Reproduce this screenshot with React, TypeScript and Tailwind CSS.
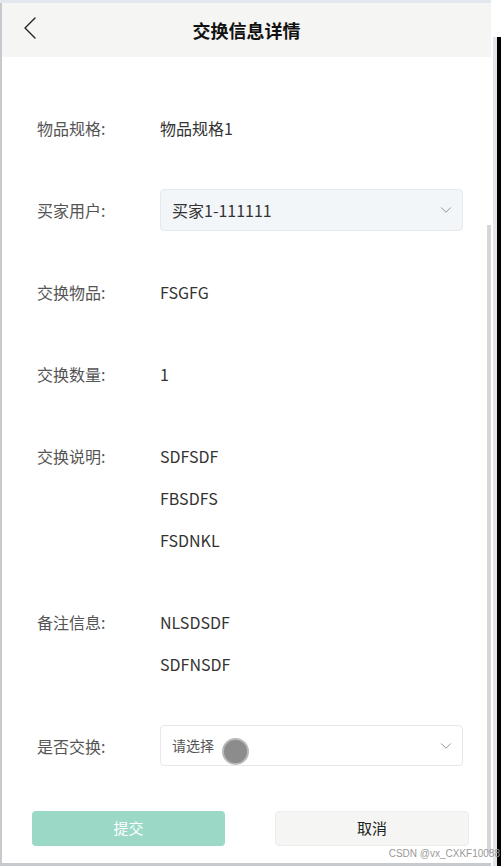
import React from "react";
import { ChevronDown } from "lucide-react";

const font = { fontFamily: '"Noto Sans CJK SC", "Noto Sans", sans-serif' };

interface RowProps {
  label: string;
  children: React.ReactNode;
}

const Row: React.FC<RowProps> = ({ label, children }) => (
  <div className="flex items-start pl-[35px] pr-[28px]">
    <div className="w-[123px] shrink-0 text-[16px] leading-[22px] text-[#555]">{label}</div>
    <div className="flex-1">{children}</div>
  </div>
);

const Value: React.FC<{ lines: string[] }> = ({ lines }) => (
  <div className="flex flex-col gap-[20px] text-[16px] leading-[22px] text-[#333]">
    {lines.map((l) => (
      <div key={l}>{l}</div>
    ))}
  </div>
);

export default function App() {
  return (
    <div className="w-[501px] h-[866px] flex bg-white overflow-hidden" style={font}>
      <div className="flex-1 flex flex-col">
        {/* top strip */}
        <div className="h-[3px] bg-[#e3e8ee]" />
        <div className="flex-1 flex">
          <div className="w-[2px] bg-[#c6cacf]" />
          <div className="flex-1 flex flex-col relative">
            {/* header */}
            <div className="h-[54px] bg-[#f5f5f3] flex items-center relative">
              <svg className="absolute left-[21px] top-[14px]" width="14" height="22" viewBox="0 0 14 22" fill="none">
                <polyline points="12,1 2,11 12,21" stroke="#222" strokeWidth="1.4" strokeLinecap="round" strokeLinejoin="round" />
              </svg>
              <div className="flex-1 text-center text-[18px] font-bold text-[#111]">交换信息详情</div>
            </div>

            {/* form */}
            <div className="flex-1 flex flex-col pt-[60px] gap-[60px]">
              <Row label="物品规格:">
                <Value lines={["物品规格1"]} />
              </Row>
              <div className="flex items-center pl-[35px] pr-[28px] -my-[10px]">
                <div className="w-[123px] shrink-0 text-[16px] leading-[22px] text-[#555]">买家用户:</div>
                <div className="flex-1 h-[42px] rounded-[4px] border border-[#e6e9ec] bg-[#f3f6f8] flex items-center pl-[11px] pr-[7px]">
                  <span className="flex-1 text-[16px] text-[#333]">买家1-111111</span>
                  <ChevronDown size={18} strokeWidth={1.2} className="text-[#888]" />
                </div>
              </div>
              <Row label="交换物品:">
                <Value lines={["FSGFG"]} />
              </Row>
              <Row label="交换数量:">
                <Value lines={["1"]} />
              </Row>
              <Row label="交换说明:">
                <Value lines={["SDFSDF", "FBSDFS", "FSDNKL"]} />
              </Row>
              <Row label="备注信息:">
                <Value lines={["NLSDSDF", "SDFNSDF"]} />
              </Row>
              <div className="flex items-center pl-[35px] pr-[28px] -my-[10px]">
                <div className="w-[123px] shrink-0 text-[16px] leading-[22px] text-[#555]">是否交换:</div>
                <div className="flex-1 h-[41px] rounded-[4px] border border-[#e8e8e8] bg-white flex items-center pl-[11px] pr-[7px] relative">
                  <span className="flex-1 text-[14px] text-[#555]">请选择</span>
                  <ChevronDown size={18} strokeWidth={1.2} className="text-[#888]" />
                  <span className="absolute left-[61px] top-[12px] w-[27px] h-[27px] rounded-full bg-[#8c8c8c] border-2 border-[#b8b8b8]" />
                </div>
              </div>
            </div>

            {/* buttons */}
            <div className="flex justify-between pl-[30px] pr-[22px] pb-[17px]">
              <button className="w-[193px] h-[35px] rounded-[4px] bg-[#9bd9c6] text-white text-[15px]">提交</button>
              <button className="w-[194px] h-[35px] rounded-[4px] bg-[#f5f5f3] border border-[#ededed] text-[#222] text-[15px]">
                取消
              </button>
            </div>

            {/* scrollbar thumb */}
            <div className="absolute right-[0px] top-[222px] bottom-[10px] w-[4px] bg-[#d6d6d6]" />
            <div
              className="absolute right-[-9px] bottom-[4px] text-[10px] text-[#999] leading-none"
              style={{ fontFamily: '"Liberation Sans", sans-serif' }}
            >
              CSDN @vx_CXKF10088
            </div>
          </div>
        </div>
        <div className="h-[3px] bg-[#c6cacf]" />
      </div>
      {/* right edge */}
      <div className="w-[10px] flex">
        <div className="w-[2px]" />
        <div className="w-[4px] flex flex-col">
          <div className="h-[37px]" />
          <div className="flex-1 bg-[#e2e6ea]" />
        </div>
        <div className="w-[4px] flex flex-col">
          <div className="h-[37px]" />
          <div className="flex-1 bg-black" />
        </div>
      </div>
    </div>
  );
}
